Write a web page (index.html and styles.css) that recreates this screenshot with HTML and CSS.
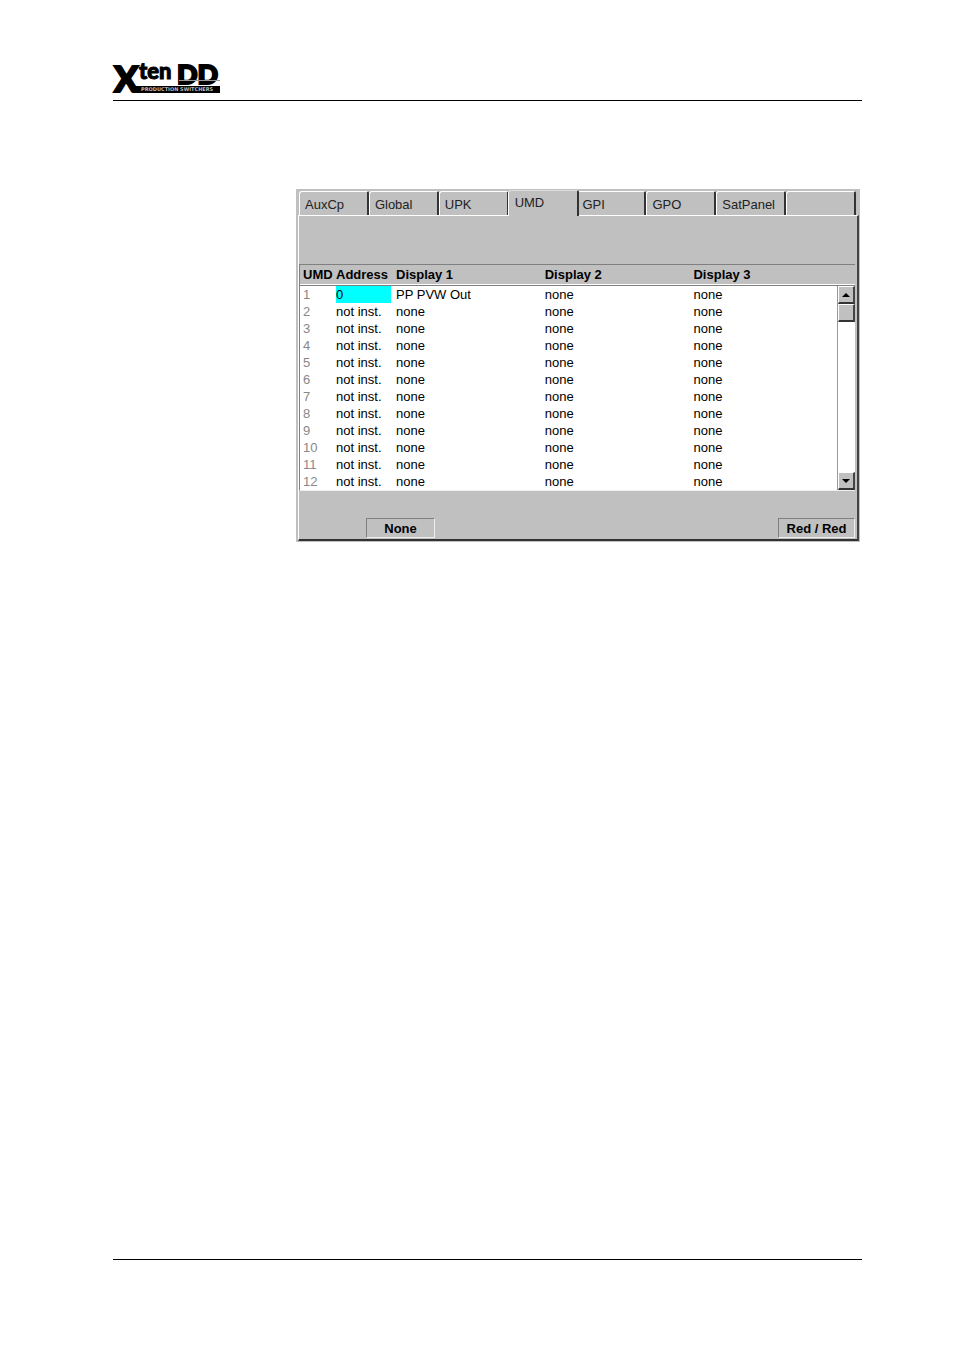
FILE: index.html
```html
<!DOCTYPE html>
<html lang="en">
<head>
<meta charset="utf-8">
<title>Xten DD – UMD</title>
<link rel="stylesheet" href="styles.css">
</head>
<body>
<header class="page-header">
  <svg class="logo" width="108" height="30" viewBox="0 0 108 30" role="img" aria-label="Xten DD Production Switchers">
    <text class="logo-x" x="1" y="28">X</text>
    <text class="logo-ten" x="26" y="15">ten</text>
    <text class="logo-dd" x="64" y="20">DD</text>
    <path class="logo-shine" d="M66 16.5H107"/>
    <path d="M22 22H107V29H26Z"/>
    <text class="logo-sub" x="28" y="27">PRODUCTION SWITCHERS</text>
  </svg>
</header>
<main class="window">
  <div class="tabs" role="tablist">
    <button class="tab" role="tab">AuxCp</button>
    <button class="tab" role="tab">Global</button>
    <button class="tab" role="tab">UPK</button>
    <button class="tab tab-active" role="tab" aria-selected="true">UMD</button>
    <button class="tab" role="tab">GPI</button>
    <button class="tab" role="tab">GPO</button>
    <button class="tab" role="tab">SatPanel</button>
    <button class="tab" role="tab" aria-label="Empty"></button>
  </div>
  <section class="panel" role="tabpanel">
    <div class="list">
      <table class="grid">
        <colgroup><col class="col-num"><col class="col-address"><col class="col-display"><col class="col-display"><col></colgroup>
        <thead><tr><th>UMD</th><th>Address</th><th>Display 1</th><th>Display 2</th><th>Display 3</th></tr></thead>
        <tbody>
          <tr><td>1</td><td><span class="selected">0</span></td><td>PP PVW Out</td><td>none</td><td>none</td></tr>
          <tr><td>2</td><td>not inst.</td><td>none</td><td>none</td><td>none</td></tr>
          <tr><td>3</td><td>not inst.</td><td>none</td><td>none</td><td>none</td></tr>
          <tr><td>4</td><td>not inst.</td><td>none</td><td>none</td><td>none</td></tr>
          <tr><td>5</td><td>not inst.</td><td>none</td><td>none</td><td>none</td></tr>
          <tr><td>6</td><td>not inst.</td><td>none</td><td>none</td><td>none</td></tr>
          <tr><td>7</td><td>not inst.</td><td>none</td><td>none</td><td>none</td></tr>
          <tr><td>8</td><td>not inst.</td><td>none</td><td>none</td><td>none</td></tr>
          <tr><td>9</td><td>not inst.</td><td>none</td><td>none</td><td>none</td></tr>
          <tr><td>10</td><td>not inst.</td><td>none</td><td>none</td><td>none</td></tr>
          <tr><td>11</td><td>not inst.</td><td>none</td><td>none</td><td>none</td></tr>
          <tr><td>12</td><td>not inst.</td><td>none</td><td>none</td><td>none</td></tr>
        </tbody>
      </table>
      <div class="scrollbar">
        <button class="scroll-button" aria-label="Scroll up"><svg width="8" height="4" viewBox="0 0 8 4"><path d="M0 4L4 0L8 4Z"/></svg></button>
        <div class="thumb"></div>
        <button class="scroll-button scroll-down" aria-label="Scroll down"><svg width="8" height="4" viewBox="0 0 8 4"><path d="M0 0H8L4 4Z"/></svg></button>
      </div>
    </div>
    <div class="actions">
      <button class="action action-none">None</button>
      <button class="action action-color">Red / Red</button>
    </div>
  </section>
</main>
<footer class="page-footer"></footer>
</body>
</html>
```
FILE: styles.css
```css
* { box-sizing: border-box; }

body {
  display: flex;
  flex-direction: column;
  min-height: 100vh;
  margin: 0;
  padding: 64px 92px 91px 113px;
  background: #fff;
  color: #000;
  font: 13px/17px "Liberation Sans", Arial, sans-serif;
}

button {
  margin: 0;
  padding: 0;
  border: 0;
  border-radius: 0;
  background: #c0c0c0;
  color: #000;
  font: inherit;
}

.page-header { border-bottom: 1px solid #000; padding-bottom: 6px; }
.page-footer { border-top: 1px solid #000; margin-top: auto; }

.logo { display: block; overflow: visible; }
.logo-x { font: 900 36px Lato, sans-serif; stroke: #000; stroke-width: 2; }
.logo-ten { font: 900 22px Lato, sans-serif; stroke: #000; stroke-width: 1; }
.logo-dd { font: 900 27px Lato, sans-serif; stroke: #000; stroke-width: 2; }
.logo-shine { stroke: #999; }
.logo-sub { font: bold 5px "DejaVu Sans", sans-serif; fill: #bbb; }

.window {
  margin: 88px 2px 0 183px;
  padding: 0 1px 1px 2px;
  background: #c0c0c0;
}

.tabs {
  display: flex;
  align-items: flex-end;
  padding: 1px 3px 0 1px;
}

.tab {
  flex: 1 1 0;
  height: 24px;
  padding: 2px 0 0 5px;
  border: solid;
  border-width: 1px 2px 0 1px;
  border-color: #fff #333 #fff #fff;
  border-radius: 3px 2px 0 0;
  color: #222;
  text-align: left;
}

.tab-active {
  z-index: 1;
  height: 26px;
  margin: 0 -2px -1px -1px;
  padding: 0 0 2px 6px;
  border-top-color: #ddd;
}

.panel {
  padding: 48px 2px 1px 0;
  border: 1px solid #fff;
  border-right: 2px solid #444;
  border-bottom: 2px solid #333;
}

.list {
  position: relative;
  border-left: 1px solid #808080;
  border-bottom: 1px solid #eee;
}

.grid {
  width: 100%;
  border-collapse: separate;
  border-spacing: 0;
  table-layout: fixed;
}

.col-num { width: 36px; }
.col-address { width: 60px; }
.col-display { width: 26.8%; }

.grid th {
  height: 22px;
  padding: 0 0 2px;
  border-top: 1px solid #808080;
  border-bottom: 1px solid #808080;
  box-shadow: inset 0 -1px #fff;
  text-align: left;
  white-space: nowrap;
}

.grid td {
  height: 17px;
  padding: 0;
  background: #fff;
  white-space: nowrap;
}

.grid th:first-child, .grid td:first-child { padding-left: 3px; }
.grid td:first-child { color: #888; }

.selected {
  display: block;
  margin-right: 5px;
  background: #0ff;
}

.scrollbar {
  position: absolute;
  top: 22px;
  right: 0;
  bottom: 0;
  display: flex;
  flex-direction: column;
  width: 18px;
  border-left: 1px solid #999;
  background: #fff;
}

.scroll-button, .thumb {
  display: grid;
  place-items: center;
  flex: none;
  height: 18px;
  border: 1px solid #fff;
  border-right: 2px solid #444;
  border-bottom: 2px solid #333;
  background: #c0c0c0;
}

.scroll-down { margin-top: auto; }

.actions {
  display: flex;
  justify-content: space-between;
  margin-top: 27px;
  padding-left: 67px;
}

.action {
  height: 20px;
  border: 1px solid #808080;
  border-right-color: #eee;
  border-bottom-color: #eee;
  font-weight: bold;
}

.action-none { width: 69px; }
.action-color { width: 77px; }
```
